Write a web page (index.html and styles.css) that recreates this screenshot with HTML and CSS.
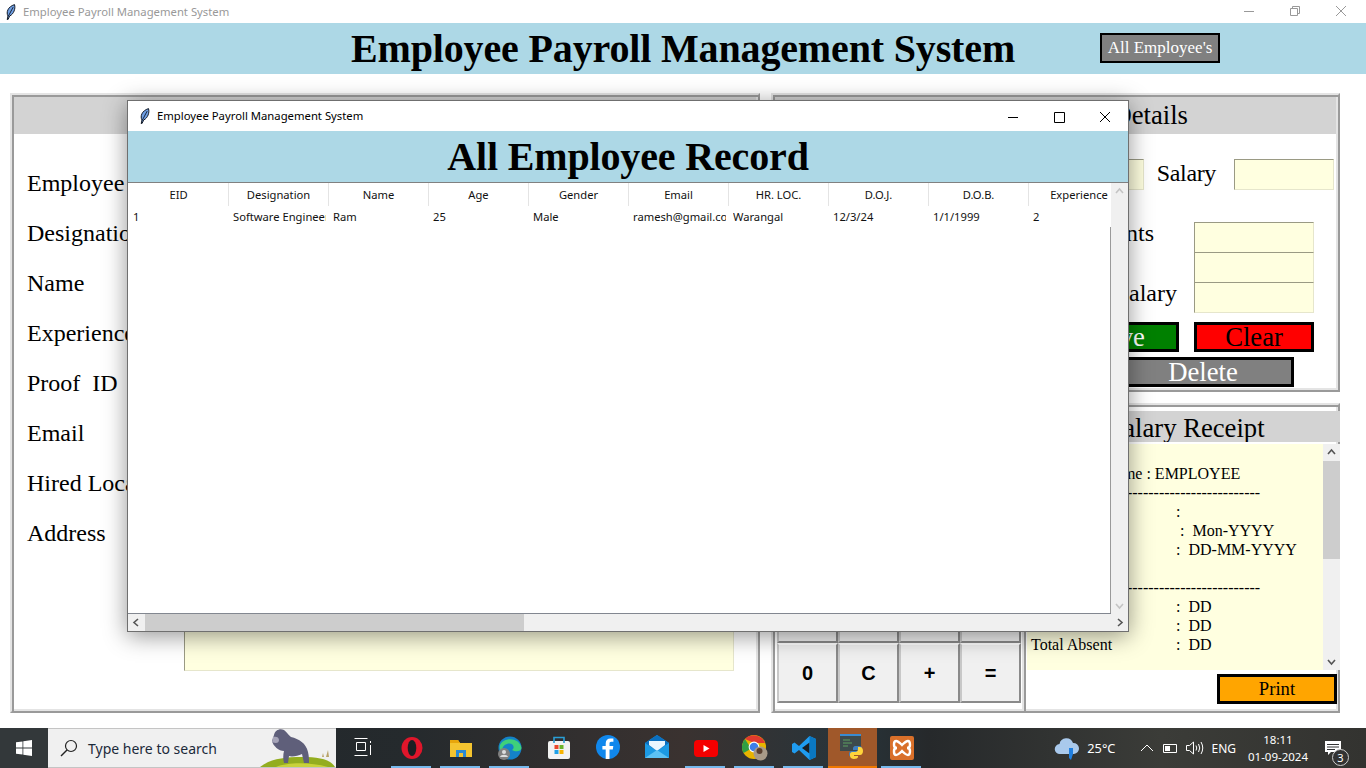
FILE: index.html
```html
<!DOCTYPE html>
<html lang="en">
<head>
<meta charset="utf-8">
<title>Employee Payroll Management System</title>
<link rel="stylesheet" href="styles.css">
</head>
<body>
<svg class="defs" width="0" height="0" aria-hidden="true">
  <defs>
    <symbol id="feather" viewBox="0 0 12 18">
      <path d="M2.300 17.500L3.200 13.500C.8 9.500 3 3 10.500.7C11.800 5 10 11 5 13.600L3.200 17.500Z" fill="#6f9fe4" stroke="#0d1420" stroke-width="1.100" stroke-linejoin="round"/>
      <path d="M3.400 14L9 3.500" stroke="#0d1420" stroke-width="1" fill="none"/>
    </symbol>
  </defs>
</svg>
<div class="screen">
  <div class="app">
    <div class="titlebar inactive">
      <svg class="feather"><use href="#feather"/></svg>
      <span class="title-text">Employee Payroll Management System</span>
      <span class="win-controls">
        <svg class="wc" viewBox="0 0 46 22"><path d="M18 10.500h10" stroke="#999" fill="none"/></svg>
        <svg class="wc" viewBox="0 0 46 22"><path d="M18.500 7.500h7v7h-7zM20.500 7.500v-2h7v7h-2" stroke="#999" fill="none"/></svg>
        <svg class="wc" viewBox="0 0 46 22"><path d="M18 5l10 10M28 5l-10 10" stroke="#999" fill="none"/></svg>
      </span>
    </div>
    <header class="app-header">
      <h1 class="app-title">Employee Payroll Management System</h1>
      <button class="btn-all">All Employee's</button>
    </header>
    <main class="workspace">
      <section class="panel left-panel">
        <h2 class="panel-title">Employee Details</h2>
        <div class="form">
          <label class="lbl">Employee Code</label><div class="entry"></div>
          <label class="lbl">Designation</label><div class="entry"></div>
          <label class="lbl">Name</label><div class="entry"></div>
          <label class="lbl">Experience</label><div class="entry"></div>
          <label class="lbl">Proof&nbsp; ID</label><div class="entry"></div>
          <label class="lbl">Email</label><div class="entry"></div>
          <label class="lbl">Hired Location</label><div class="entry"></div>
          <label class="lbl">Address</label><div class="entry address"></div>
        </div>
      </section>
      <div class="right-col">
        <section class="panel salary-panel">
          <h2 class="panel-title">Employee Salary Details</h2>
          <div class="salary-row first">
            <div class="entry small"></div>
            <label class="lbl">Salary</label>
            <div class="entry small"></div>
          </div>
          <div class="salary-stack">
            <div class="salary-row"><label class="lbl gap-a">Total Presents</label><div class="entry stack"></div></div>
            <div class="salary-row"><label class="lbl gap-c">Bonus</label><div class="entry stack"></div></div>
            <div class="salary-row"><label class="lbl gap-b">Net Salary</label><div class="entry stack"></div></div>
          </div>
          <div class="action-row">
            <button class="btn big green">Save</button>
            <button class="btn big red">Clear</button>
          </div>
          <div class="action-row second">
            <button class="btn big gray">Delete</button>
          </div>
        </section>
        <section class="panel bottom-panel">
          <div class="calc">
            <div class="calc-display"></div>
            <div class="calc-grid">
              <button class="key">7</button><button class="key">8</button><button class="key">9</button><button class="key">/</button>
              <button class="key">4</button><button class="key">5</button><button class="key">6</button><button class="key">*</button>
              <button class="key">1</button><button class="key">2</button><button class="key">3</button><button class="key">-</button>
              <button class="key">0</button><button class="key">C</button><button class="key">+</button><button class="key">=</button>
            </div>
          </div>
          <div class="receipt">
            <h2 class="panel-title receipt-title">Salary Receipt</h2>
            <div class="receipt-body">
              <div class="receipt-text">
                <p class="rline center">Company Name : EMPLOYEE</p>
                <p class="rline">-------------------------------------------</p>
                <p class="rline"><span class="rkey">Employee ID</span><span>:</span></p>
                <p class="rline"><span class="rkey shift">Salary Of</span><span>:&nbsp; Mon-YYYY</span></p>
                <p class="rline"><span class="rkey">Generated On</span><span>:&nbsp; DD-MM-YYYY</span></p>
                <p class="rline">&nbsp;</p>
                <p class="rline">-------------------------------------------</p>
                <p class="rline"><span class="rkey">Total Days</span><span>:&nbsp; DD</span></p>
                <p class="rline"><span class="rkey">Total Present</span><span>:&nbsp; DD</span></p>
                <p class="rline"><span class="rkey">Total Absent</span><span>:&nbsp; DD</span></p>
              </div>
              <div class="vbar receipt-bar">
                <svg class="arrow" viewBox="0 0 17 17"><path d="M5 10l3.500-4 3.500 4" stroke="#555" stroke-width="1.600" fill="none"/></svg>
                <div class="vthumb"></div>
                <div class="vrest"></div>
                <svg class="arrow" viewBox="0 0 17 17"><path d="M5 7l3.500 4 3.500-4" stroke="#555" stroke-width="1.600" fill="none"/></svg>
              </div>
            </div>
            <div class="print-row"><button class="btn print">Print</button></div>
          </div>
        </section>
      </div>
    </main>
  </div>

  <div class="child-window">
    <div class="titlebar child-bar">
      <svg class="feather"><use href="#feather"/></svg>
      <span class="title-text">Employee Payroll Management System</span>
      <span class="win-controls">
        <svg class="wc" viewBox="0 0 46 22"><path d="M18 11.500h10" stroke="#000" fill="none"/></svg>
        <svg class="wc" viewBox="0 0 46 22"><path d="M18.500 6.500h10v10h-10z" stroke="#000" fill="none"/></svg>
        <svg class="wc" viewBox="0 0 46 22"><path d="M18 6l10 10M28 6l-10 10" stroke="#000" fill="none"/></svg>
      </span>
    </div>
    <div class="child-header"><h1 class="child-title">All Employee Record</h1></div>
    <div class="tree-wrap">
      <div class="tree">
        <div class="tree-head">
          <span class="th">EID</span><span class="th">Designation</span><span class="th">Name</span><span class="th">Age</span><span class="th">Gender</span><span class="th">Email</span><span class="th">HR. LOC.</span><span class="th">D.O.J.</span><span class="th">D.O.B.</span><span class="th">Experience</span>
        </div>
        <div class="tree-row">
          <span class="td"><span class="clip">1</span></span><span class="td"><span class="clip">Software Engineer</span></span><span class="td"><span class="clip">Ram</span></span><span class="td"><span class="clip">25</span></span><span class="td"><span class="clip">Male</span></span><span class="td"><span class="clip">ramesh@gmail.com</span></span><span class="td"><span class="clip">Warangal</span></span><span class="td"><span class="clip">12/3/24</span></span><span class="td"><span class="clip">1/1/1999</span></span><span class="td"><span class="clip">2</span></span>
        </div>
        <div class="tree-fill"></div>
      </div>
      <div class="vbar tree-bar">
        <svg class="arrow" viewBox="0 0 17 17"><path d="M5 10l3.500-4 3.500 4" stroke="#c4c4c4" stroke-width="1.600" fill="none"/></svg>
        <div class="vrest"></div>
        <svg class="arrow" viewBox="0 0 17 17"><path d="M5 7l3.500 4 3.500-4" stroke="#c4c4c4" stroke-width="1.600" fill="none"/></svg>
      </div>
    </div>
    <div class="hbar">
      <svg class="arrow" viewBox="0 0 17 17"><path d="M10 5l-4 3.500 4 3.500" stroke="#555" stroke-width="1.600" fill="none"/></svg>
      <div class="hthumb"></div>
      <div class="hrest"></div>
      <svg class="arrow" viewBox="0 0 17 17"><path d="M7 5l4 3.500-4 3.500" stroke="#555" stroke-width="1.600" fill="none"/></svg>
    </div>
  </div>

  <footer class="taskbar">
    <div class="start">
      <svg width="16" height="16" viewBox="0 0 16 16"><path d="M0 2.300l6.500-.9v6.200H0zM7.300 1.300L16 0v7.600H7.300zM0 8.400h6.500v6.200L0 13.700zM7.300 8.400H16V16l-8.700-1.200z" fill="#fff"/></svg>
    </div>
    <div class="search">
      <svg width="18" height="18" viewBox="0 0 18 18"><circle cx="11" cy="7" r="5.500" fill="none" stroke="#222" stroke-width="1.200"/><path d="M7 11l-6 6" stroke="#222" stroke-width="1.400"/></svg>
      <span class="search-text">Type here to search</span>
      <svg class="doodle" width="78" height="39" viewBox="0 0 78 39">
        <path d="M2 39C12 31 26 29 44 29C60 29 72 31 77 39Z" fill="#93ad1f"/>
        <path d="M18 39C30 34 52 34 70 39Z" fill="#c8d23a"/>
        <path d="M68 29l2-7 1 7zM64 29l1-4 1 4z" fill="#b9a36a"/>
        <path d="M16 7C17 2 22 0 26 2C29 4 30 7 33 9C41 11 48 15 50 24C51 28 51 32 51 35H46L44 26C40 28 34 29 31 28L30 35H26C25 31 25 27 26 23C21 23 15 18 14 13Z" fill="#5f5f7a"/>
        <path d="M15 9C18 8 21 9 21 12C21 15 18 16 14 14Z" fill="#a6a4b8"/>
      </svg>
    </div>
    <div class="task-icons">
      <span class="ti"><svg width="20" height="20" viewBox="0 0 20 20"><path d="M1.500 1.500h13M1.500 18.500h13M3.500 5.500h9v8h-9z" stroke="#fff" fill="none"/><path d="M17.500 4v2M17.500 8v10" stroke="#fff" fill="none"/></svg></span>
      <span class="ti on"><svg width="24" height="24" viewBox="0 0 24 24"><ellipse cx="12" cy="12" rx="10.500" ry="11" fill="#e0162b"/><ellipse cx="12" cy="12" rx="4.300" ry="8" fill="#1b1f23"/></svg></span>
      <span class="ti on"><svg width="24" height="22" viewBox="0 0 24 22"><path d="M1 3h8l2 3h12v14H1z" fill="#f4c430"/><path d="M1 3h8l2 3H1z" fill="#e8a60c"/><path d="M7 20v-7h10v7h-3v-4h-4v4z" fill="#2a8ad4"/></svg></span>
      <span class="ti on"><svg width="24" height="24" viewBox="0 0 24 24"><circle cx="12" cy="12" r="11.500" fill="#1482c8"/><path d="M2 9C6 1 21 1 23.500 12C23 16 17 16 14 14C18 11 14 6 9 8C5 9 3 13 5 18C2 16 1 12 2 9Z" fill="#3fd07a"/><circle cx="6" cy="18" r="6" fill="#808080"/><circle cx="6" cy="16" r="2" fill="#ddd"/><path d="M2 21c1-3 7-3 8 0z" fill="#ddd"/></svg></span>
      <span class="ti"><svg width="24" height="24" viewBox="0 0 24 24"><rect x="1" y="6" width="22" height="18" rx="2" fill="#f2f2f2"/><path d="M7 8V2.500h10V8" stroke="#2a9fd6" stroke-width="1.600" fill="none"/><rect x="7.500" y="10" width="4" height="4" fill="#e8462a"/><rect x="12.500" y="10" width="4" height="4" fill="#6ab42a"/><rect x="7.500" y="15" width="4" height="4" fill="#1fa0e8"/><rect x="12.500" y="15" width="4" height="4" fill="#f8b400"/></svg></span>
      <span class="ti"><svg width="24" height="24" viewBox="0 0 24 24"><circle cx="12" cy="12" r="12" fill="#1087ec"/><path d="M13.500 24v-9.500h3.300l.5-3.600h-3.800V8.600c0-1.100.4-1.800 1.900-1.800h2V3.600c-.4 0-1.500-.2-2.900-.2-2.900 0-4.800 1.700-4.800 5v2.500H6.400v3.600h3.300V24z" fill="#fff"/></svg></span>
      <span class="ti"><svg width="24" height="24" viewBox="0 0 24 24"><path d="M0 8L12 0l12 8v15H0z" fill="#1c9ae4"/><path d="M0 8l12 8 12-8L12 0z" fill="#0a6fc0"/><path d="M4 6h16v4l-8 6-8-6z" fill="#eaf6ff"/><path d="M0 23l12-8 12 8z" fill="#5cc2f5"/></svg></span>
      <span class="ti on"><svg width="24" height="17" viewBox="0 0 24 17"><rect width="24" height="17" rx="4" fill="#f50000"/><path d="M9.500 5l6 3.500-6 3.500z" fill="#fff"/></svg></span>
      <span class="ti on"><svg width="26" height="26" viewBox="0 0 26 26"><circle cx="12" cy="12" r="12" fill="#e8b400"/><path d="M12 12L1.600 18A12 12 0 0 1 3 4L8 12Z" fill="#2f9e44"/><path d="M3 4A12 12 0 0 1 23 8H12Z" fill="#e03a2e"/><circle cx="12" cy="12" r="5.400" fill="#fff"/><circle cx="12" cy="12" r="4.300" fill="#3d7fe8"/><circle cx="18.500" cy="18.500" r="7" fill="#a89a88"/><circle cx="17.500" cy="16" r="3" fill="#5a4030"/></svg></span>
      <span class="ti on"><svg width="24" height="24" viewBox="0 0 24 24"><path d="M17.500 0L24 3v18l-6.500 3L7 14l-4.500 3.500L0 16V8l2.500-1.500L7 10z" fill="#1f9cf0"/><path d="M17.500 6.500L10 12l7.500 5.500z" fill="#1b1f23"/><path d="M17.500 0L24 3v18l-6.500 3z" fill="#0a78c2"/></svg></span>
      <span class="ti active"><svg width="26" height="26" viewBox="0 0 26 26"><rect x="0" y="0" width="21" height="17" fill="#3d4a4c"/><rect x="0" y="0" width="21" height="2" fill="#3a8bd0"/><path d="M3 6h7M3 9h9M3 12h5" stroke="#5fa05f"/><path d="M12 11c-3 0-3 2-3 3v1h5v1H8c-2 0-3 1-3 3s1 3 3 3h1v-2c0-1 1-2 3-2h4c1 0 2-1 2-2v-3c0-1-1-2-3-2z" fill="#3f7fc0" transform="translate(4 1)"/><path d="M18 13v2c0 2-1 3-3 3h-3c-1 0-2 1-2 2v2c0 2 2 3 4 3s4-1 4-2v-1h-4v-1h6c2 0 3-2 3-4s-1-4-3-4z" fill="#ffd43b"/></svg></span>
      <span class="ti on"><svg width="24" height="24" viewBox="0 0 24 24"><rect width="24" height="24" rx="2" fill="#d9702a"/><path d="M6 5c2 0 3 1 6 4 3-3 4-4 6-4s2 2 2 4-1 3-3 3c2 0 3 1 3 3s0 4-2 4-3-1-6-4c-3 3-4 4-6 4s-2-2-2-4 1-3 3-3c-2 0-3-1-3-3s0-4 2-4z" fill="none" stroke="#fff" stroke-width="2.400"/></svg></span>
    </div>
    <div class="tray">
      <span class="weather">
        <svg width="26" height="24" viewBox="0 0 26 24"><path d="M6 18a5 5 0 0 1-.5-10A7 7 0 0 1 19 7a5.500 5.500 0 0 1 1 11z" fill="#a9c9ec"/><path d="M15 12h4v6l-2 6-2-2z" fill="#1f7fe0"/></svg>
        <span class="tray-text">25°C</span>
      </span>
      <svg class="chev" width="14" height="8" viewBox="0 0 14 8"><path d="M1 7l6-6 6 6" stroke="#fff" fill="none"/></svg>
      <svg class="batt" width="15" height="9" viewBox="0 0 15 9"><path d="M.5.500h13v8H.500z" stroke="#fff" fill="none"/><rect x="2" y="2" width="5" height="5" fill="#fff"/></svg>
      <svg class="vol" width="18" height="14" viewBox="0 0 18 14"><path d="M.5 4.500h3l4-3.500v12l-4-3.500h-3z" stroke="#fff" fill="none"/><path d="M10 4.500q1.500 2.500 0 5M12.500 3q2.500 4 0 8M15 1q3.500 6 0 12" stroke="#fff" fill="none"/></svg>
      <span class="tray-text eng">ENG</span>
      <span class="clock"><span>18:11</span><span>01-09-2024</span></span>
      <span class="notif">
        <svg width="16" height="14" viewBox="0 0 16 14"><path d="M0 0h16v11H6l-3 3v-3H0z" fill="#fff"/><path d="M2 3.500h12M2 6h12M2 8.500h8" stroke="#333"/></svg>
        <span class="badge">3</span>
      </span>
    </div>
  </footer>
</div>
</body>
</html>
```
FILE: styles.css
```css
* { box-sizing: border-box; }
html, body { margin: 0; padding: 0; }
body { width: 1366px; height: 768px; overflow: hidden; background: #fff; font-family: "Liberation Serif", serif; }
.defs { position: absolute; }
.screen { position: relative; width: 1366px; height: 768px; display: flex; flex-direction: column; }
.app { height: 728px; display: flex; flex-direction: column; background: #fff; }

.titlebar { display: flex; align-items: center; font-family: "Noto Sans", sans-serif; font-size: 11.300px; background: #fff; }
.inactive { height: 23px; padding: 0 2px 0 5px; color: #999; }
.feather { width: 11px; height: 16px; flex: none; }
.title-text { margin-left: 7px; white-space: nowrap; }
.win-controls { margin-left: auto; display: flex; }
.wc { width: 46px; height: 22px; display: block; }

.app-header { height: 51px; background: #add8e6; display: flex; align-items: center; padding-left: 351px; }
.app-title { margin: 0; font-size: 40px; letter-spacing: -.15px; line-height: 51px; font-weight: 700; white-space: nowrap; }
.btn-all { margin-left: 85px; width: 120px; height: 30px; margin-top: -2px; background: #808080; color: #fff; border: 2px solid #000; padding: 0; font: 17px "Liberation Serif", serif; }

.workspace { flex: 1; display: flex; gap: 11px; padding: 19px 26px 15px 10px; min-height: 0; }
.panel { border: 2px solid; border-color: #e4e4e4 #9a9a9a #9a9a9a #e4e4e4; box-shadow: inset 2px 2px 0 #9a9a9a, inset -2px -2px 0 #e4e4e4; padding: 2px; background: #fff; display: flex; flex-direction: column; min-height: 0; }
.left-panel { width: 750px; }
.panel-title { margin: 0; height: 37px; flex: none; background: #d3d3d3; font-size: 26.670px; font-weight: 400; line-height: 37px; text-align: center; white-space: nowrap; overflow: hidden; }
.lbl { font-size: 24px; line-height: 30px; white-space: nowrap; }
.entry { background: #ffffe0; border: 1px solid; border-color: #9a9a84 #e6e6cc #e6e6cc #9a9a84; height: 31px; }

.form { display: grid; grid-template-columns: 157px 550px; grid-auto-rows: 50px; padding: 34px 0 0 13px; }
.form .lbl { align-self: start; }
.address { height: 169px; margin-top: -16px; }

.right-col { flex: 1; display: flex; flex-direction: column; gap: 11px; min-width: 0; }
.salary-panel { height: 299px; }
.salary-row { display: flex; justify-content: flex-end; align-items: center; }
.salary-row.first { padding: 25px 2px 0 0; height: 56px; }
.salary-row.first .lbl { margin: 0 18px 3px 13px; letter-spacing: -.35px; }
.entry.small { width: 100px; }
.salary-stack { margin-top: 32px; }
.salary-stack .salary-row { padding-right: 22px; height: 30px; }
.entry.stack { width: 120px; height: 31px; flex: none; }
.salary-stack .lbl { margin-bottom: 8px; }
.gap-a { margin-right: 40px; }
.gap-b { margin-right: 17px; }
.gap-c { margin-right: 80px; }
.action-row { display: flex; justify-content: flex-end; gap: 15px; padding: 10px 22px 0 0; }
.action-row.second { padding: 5px 42px 0 0; }
.btn { border: 3px solid #000; padding: 0; font-family: "Liberation Serif", serif; }
.big { width: 120px; height: 30px; font-size: 26.670px; line-height: 24px; }
.green { background: #008000; color: #fff; }
.red { background: #f00; color: #000; }
.gray { background: #808080; color: #fff; width: 182px; }

.bottom-panel { flex: 1; flex-direction: row; padding: 0; }
.calc { width: 253px; flex: none; padding: 0 2px 8px 4px; display: flex; flex-direction: column; border-right: 2px solid #9a9a9a; box-shadow: inset -2px 0 0 #e4e4e4; }
.calc-display { height: 50px; flex: none; }
.calc-grid { flex: 1; display: grid; grid-template-columns: repeat(4, 61px); grid-template-rows: repeat(4, 60px); align-content: end; }
.key { background: #f0f0f0; border: 2px solid; border-color: #fff #8a8a8a #8a8a8a #c8c8c8; padding: 0; font: 700 20px "Liberation Sans", sans-serif; color: #000; }
.receipt { flex: 1; display: flex; flex-direction: column; min-width: 0; padding-left: 1px; margin-right: -2px; }
.receipt-title { height: 31px; margin-top: 6px; line-height: 35px; padding-left: 6px; }
.receipt-body { display: flex; height: 226px; margin-top: 2px; flex: none; }
.receipt-text { flex: 1; background: #ffffe0; padding: 20px 0 0 4px; font-size: 16px; line-height: 19px; overflow: hidden; min-width: 0; }
.rline { margin: 0; display: flex; white-space: nowrap; height: 19px; }
.rline.center { padding-left: 7px; }
.rkey { width: 145px; flex: none; }
.rkey.shift { width: 149px; }
.vbar { display: flex; flex-direction: column; width: 17px; flex: none; background: #f0f0f0; }
.arrow { width: 17px; height: 17px; display: block; flex: none; }
.vthumb { height: 98px; flex: none; background: #cdcdcd; }
.vrest { flex: 1; }
.print-row { display: flex; justify-content: flex-end; padding: 4px 3px 0 0; }
.print { width: 120px; height: 30px; background: #ffa500; font-size: 18.670px; line-height: 22px; }

.child-window { position: absolute; left: 127px; top: 100px; width: 1002px; height: 532px; border: 1px solid #6f6f6f; background: #fff; box-shadow: 0 4px 22px rgba(0,0,0,.42); display: flex; flex-direction: column; }
.child-bar { height: 30px; padding: 0 0 1px 11px; color: #000; flex: none; }
.child-bar .title-text { margin-bottom: 1px; }
.child-bar .wc { margin-top: 3px; }
.child-header { height: 52px; flex: none; background: #add8e6; border-bottom: 1px solid #808080; text-align: center; }
.child-title { margin: 0; font-size: 40px; letter-spacing: -.15px; line-height: 52px; font-weight: 700; }
.tree-wrap { flex: 1; display: flex; min-height: 0; }
.tree { flex: 1; display: flex; flex-direction: column; overflow: hidden; min-width: 0; border-bottom: 1px solid #828790; padding-left: 1px; }
.tree-head, .tree-row { display: grid; grid-template-columns: repeat(10, 100px); width: 1000px; flex: none; font-family: "Noto Sans", sans-serif; font-size: 11.200px; color: #111; }
.tree-head { height: 22px; line-height: 23px; }
.th { text-align: center; border-right: 1px solid #e4e4e4; white-space: nowrap; }
.th:last-child { border-right: 0; }
.tree-row { height: 22px; line-height: 24px; }
.td { padding: 0 3px 0 4px; display: block; min-width: 0; }
.clip { display: block; overflow: hidden; white-space: nowrap; }
.tree-fill { flex: 1; border-right: 1px solid #9a9a9a; }
.hbar { height: 17px; flex: none; display: flex; background: #f0f0f0; }
.hthumb { width: 379px; flex: none; background: #cdcdcd; }
.hrest { flex: 1; }

.taskbar { height: 40px; display: flex; align-items: stretch; background: linear-gradient(90deg, #20262a 0%, #252a2d 30%, #3a3230 50%, #28343a 62%, #26292b 68%, #3b3c38 85%, #333330 100%); color: #fff; font-family: "Noto Sans", sans-serif; }
.start { width: 48px; display: flex; align-items: center; justify-content: center; background: #33383a; }
.search { width: 288px; background: #f0f0f0; border: 1px solid #c4c4c4; border-width: 1px 0; display: flex; align-items: center; padding-left: 12px; overflow: hidden; color: #1c2a3a; }
.search-text { margin-left: 10px; font-size: 14px; white-space: nowrap; }
.doodle { margin-left: auto; align-self: flex-end; flex: none; }
.task-icons { display: flex; margin-left: 2px; }
.ti { width: 49px; display: flex; align-items: center; justify-content: center; border-bottom: 2px solid transparent; position: relative; }
.ti.on { border-bottom: 0; }
.ti.on::after { content: ""; position: absolute; left: 4px; right: 5px; bottom: 0; height: 2px; background: #76b9ed; }
.ti.active { background: #a0582a; border-bottom: 2px solid #f07800; }
.tray { margin-left: auto; display: flex; align-items: center; }
.weather { display: flex; align-items: center; gap: 7px; margin-right: 25px; }
.tray-text { white-space: nowrap; }
.weather .tray-text { font-size: 12.800px; }
.chev { margin-right: 9px; }
.batt { margin-right: 8px; }
.vol { margin-right: 7px; }
.eng { font-size: 12px; }
.clock { display: flex; flex-direction: column; align-items: center; width: 72px; margin-left: 6px; font-size: 11.500px; line-height: 17px; }
.notif { position: relative; width: 52px; height: 100%; display: flex; align-items: center; padding-left: 11px; }
.badge { position: absolute; left: 18px; top: 21px; width: 17px; height: 17px; border: 1px solid #ccc; border-radius: 50%; background: #333; font-size: 11px; line-height: 15px; text-align: center; color: #fff; }
```
